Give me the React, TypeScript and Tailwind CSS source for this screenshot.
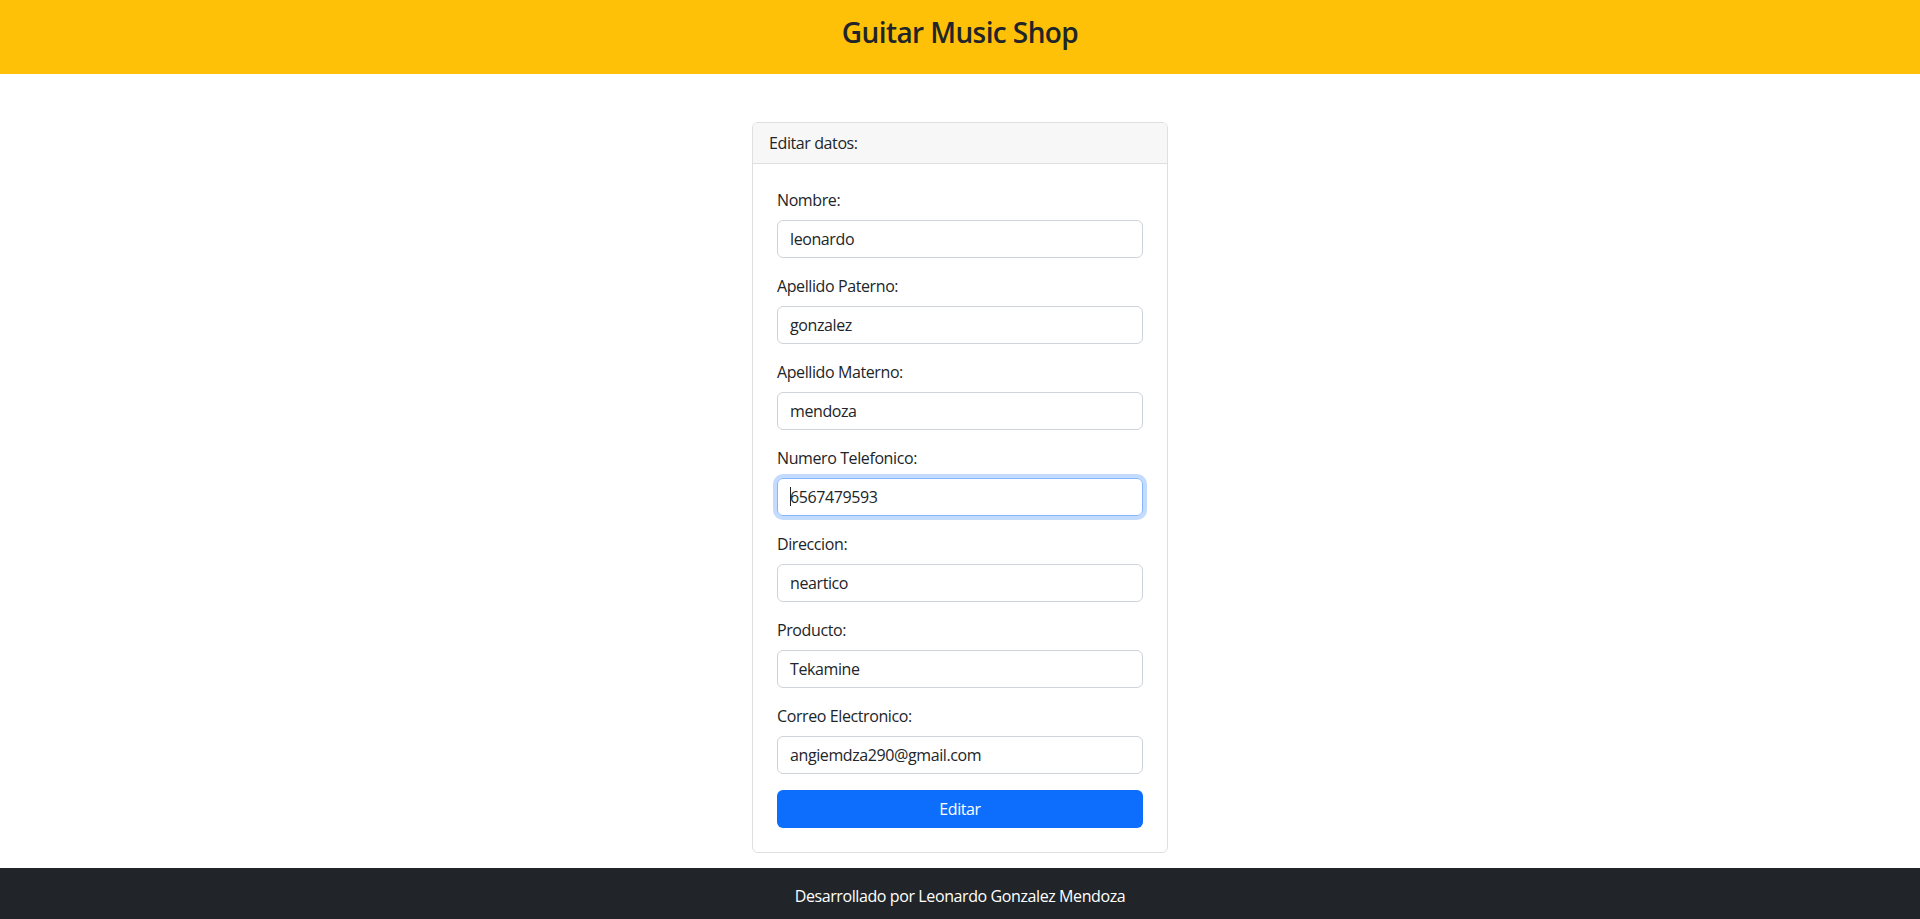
import type { JSX } from "react";

type Field = {
  id: string;
  label: string;
  value: string;
  focused?: boolean;
};

const FIELDS: Field[] = [
  { id: "nombre", label: "Nombre:", value: "leonardo" },
  { id: "paterno", label: "Apellido Paterno:", value: "gonzalez" },
  { id: "materno", label: "Apellido Materno:", value: "mendoza" },
  { id: "telefono", label: "Numero Telefonico:", value: "6567479593", focused: true },
  { id: "direccion", label: "Direccion:", value: "neartico" },
  { id: "producto", label: "Producto:", value: "Tekamine" },
  { id: "correo", label: "Correo Electronico:", value: "angiemdza290@gmail.com" },
];

function FormField({ field }: { field: Field }): JSX.Element {
  return (
    <div className="mb-4">
      <label htmlFor={field.id} className="mb-2 block leading-6">
        {field.label}
      </label>
      <div
        className={
          field.focused
            ? "flex h-[38px] items-center rounded-[6px] border border-[#86b7fe] px-3 shadow-[0_0_0_4px_rgba(13,110,253,0.25)]"
            : "flex h-[38px] items-center rounded-[6px] border border-[#ced4da] px-3"
        }
      >
        {field.focused && <span className="mr-[-1px] h-[19px] w-px bg-[#212529]" />}
        <span id={field.id} className="leading-6">
          {field.value}
        </span>
      </div>
    </div>
  );
}

export default function App(): JSX.Element {
  return (
    <div className="min-h-screen bg-white text-[#212529] [font-family:'Open_Sans','Noto_Sans',sans-serif] text-base tracking-[-0.4px]">
      <header className="bg-[#ffc107] py-4 text-center">
        <h3 className="mb-2 text-[28px] font-semibold leading-[1.2] tracking-[-0.6px]">Guitar Music Shop</h3>
      </header>

      <main className="mt-12 flex justify-center">
        <section className="w-[416px] rounded-[6px] border border-[#dfdfdf]">
          <div className="rounded-t-[5px] border-b border-[#dfdfdf] bg-[#f7f7f7] px-4 py-2 leading-6">Editar datos:</div>
          <div className="p-6">
            {FIELDS.map((field) => (
              <FormField key={field.id} field={field} />
            ))}
            <button
              type="button"
              className="h-[38px] w-full rounded-[6px] bg-[#0d6efd] leading-6 tracking-[-0.4px] text-white"
            >
              Editar
            </button>
          </div>
        </section>
      </main>

      <footer className="mt-[15px] bg-[#212529] py-4 text-center leading-6 text-white">
        Desarrollado por Leonardo Gonzalez Mendoza
      </footer>
    </div>
  );
}
